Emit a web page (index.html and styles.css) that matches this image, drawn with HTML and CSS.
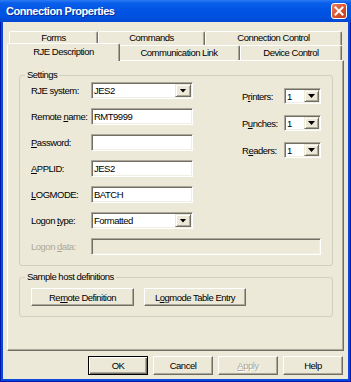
FILE: index.html
```html
<!doctype html>
<html lang="en">
<head>
    <meta charset="UTF-8">
    <title>Connection Properties</title>
    <link rel="stylesheet" href="styles.css">
</head>
<body>
<div class="window">
    <div class="titlebar">
        <span class="title">Connection Properties</span>
        <span class="close" aria-label="Close">
            <svg width="14" height="14" viewBox="0 0 14 14"><path d="M3.5 3.5l7 7M10.5 3.5l-7 7" stroke="#fff" stroke-width="2" stroke-linecap="square"/></svg>
        </span>
    </div>
    <div class="client">
        <div class="tab-row back">
            <div class="tab t-forms">Forms</div>
            <div class="tab t-commands">Commands</div>
            <div class="tab t-control">Connection Control</div>
        </div>
        <div class="tab-row front">
            <div class="tab t-rje selected">RJE Description</div>
            <div class="tab t-link">Communication Link</div>
            <div class="tab t-device">Device Control</div>
        </div>
        <div class="page">
            <fieldset class="group settings">
                <legend>Settings</legend>
                <div class="settings-top">
                    <div class="fields">
                        <label>RJE system:</label>
                        <div class="input combo"><span>JES2</span><i class="drop"></i></div>
                        <label>Remote <u>n</u>ame:</label>
                        <div class="input">RMT9999</div>
                        <label><u>P</u>assword:</label>
                        <div class="input"></div>
                        <label><u>A</u>PPLID:</label>
                        <div class="input">JES2</div>
                        <label><u>L</u>OGMODE:</label>
                        <div class="input">BATCH</div>
                        <label>Logon <u>t</u>ype:</label>
                        <div class="input combo"><span>Formatted</span><i class="drop"></i></div>
                    </div>
                    <div class="devices">
                        <label>P<u>r</u>inters:</label>
                        <div class="input combo small"><span>1</span><i class="drop"></i></div>
                        <label>P<u>u</u>nches:</label>
                        <div class="input combo small"><span>1</span><i class="drop"></i></div>
                        <label>R<u>e</u>aders:</label>
                        <div class="input combo small"><span>1</span><i class="drop"></i></div>
                    </div>
                </div>
                <div class="logon-data">
                    <label class="disabled">Logon <u>d</u>ata:</label>
                    <div class="input off"></div>
                </div>
            </fieldset>
            <fieldset class="group samples">
                <legend>Sample host definitions</legend>
                <div class="sample-buttons">
                    <button class="btn remote">Re<u>m</u>ote Definition</button>
                    <button class="btn logmode">L<u>o</u>gmode Table Entry</button>
                </div>
            </fieldset>
        </div>
        <div class="actions">
            <button class="btn default">OK</button>
            <button class="btn">Cancel</button>
            <button class="btn disabled"><u>A</u>pply</button>
            <button class="btn">Help</button>
        </div>
    </div>
</div>
</body>
</html>
```

FILE: styles.css
```css
body {
    margin: 0;
    font-family: "Liberation Sans", Arial, sans-serif;
    font-size: 9.5px;
    letter-spacing: -0.5px;
    color: #000;
}
.window {
    width: 351px;
    height: 382px;
    display: flex;
    flex-direction: column;
    background: #0A48DA;
    box-shadow: inset 1px 0 #0019A8, inset -1px 0 #0019A8, inset 0 -1px #0019A8;
}
.titlebar {
    height: 22px;
    flex: none;
    display: flex;
    align-items: center;
    justify-content: space-between;
    padding: 0 4px 0 6px;
    background: linear-gradient(#2C7BF6, #0A5FEA 3px, #0055E5 9px, #0052E0 16px, #0047D2);
}
.title {
    color: #fff;
    font-weight: bold;
    font-size: 11px;
    letter-spacing: -0.45px;
    text-shadow: 1px 1px #0A2A9A;
}
.close {
    box-sizing: border-box;
    width: 16px;
    height: 16px;
    display: flex;
    align-items: center;
    justify-content: center;
    border: 1px solid #fff;
    border-radius: 3px;
    background-color: #D9532F;
    background-image: linear-gradient(135deg, #EC8568, #DD5633 45%, #C23D1C);
}
.client {
    flex: 1;
    margin: 0 3px 3px;
    background: #ECE9D8;
    padding: 9px 4px 4px;
    display: flex;
    flex-direction: column;
}
.tab-row {
    display: flex;
    padding-left: 2px;
}
.tab {
    box-sizing: border-box;
    height: 14px;
    border: 1px solid #fff;
    border-bottom: 0;
    border-right-color: #716F64;
    border-radius: 2px 2px 0 0;
    box-shadow: inset -1px 0 #ACA899;
    text-align: center;
    line-height: 12px;
    white-space: nowrap;
}
.front .tab {
    height: 15px;
    line-height: 13px;
}
.t-forms { width: 89px; }
.t-commands { width: 107px; }
.t-control { width: 137px; }
.t-rje { width: 109px; }
.t-link { width: 122px; }
.t-device { width: 102px; }
.front .tab.selected {
    width: 113px;
    height: 18px;
    margin: -2px -2px -1px;
    line-height: 15px;
    position: relative;
    z-index: 1;
    background: #ECE9D8;
}
.page {
    position: relative;
    box-sizing: border-box;
    height: 291px;
    border: 1px solid #fff;
    border-right-color: #716F64;
    border-bottom-color: #716F64;
    box-shadow: inset -1px -1px #ACA899;
    padding: 8px 0 0 11px;
}
.group {
    box-sizing: border-box;
    width: 314px;
    margin: 0;
    border: 1px solid #D0D0BF;
    border-radius: 3px;
    padding: 1px 11px 10px;
}
.group legend {
    margin-left: -6px;
    padding: 0 2px;
    line-height: 12px;
}
.settings-top {
    display: flex;
    align-items: flex-start;
}
.fields {
    display: grid;
    grid-template-columns: 60px 102px;
    grid-auto-rows: 17px;
    row-gap: 9px;
    align-items: center;
}
.devices {
    margin-left: auto;
    margin-top: 6px;
    display: grid;
    grid-template-columns: 42px 37px;
    grid-auto-rows: 16px;
    row-gap: 11px;
    align-items: center;
}
.logon-data {
    display: grid;
    grid-template-columns: 60px 230px;
    height: 17px;
    margin-top: 9px;
    align-items: center;
}
label {
    white-space: nowrap;
}
label.disabled {
    color: #ACA899;
}
.input {
    box-sizing: border-box;
    height: 100%;
    background: #fff;
    border: 1px solid;
    border-color: #ACA899 #fff #fff #ACA899;
    box-shadow: inset 1px 1px #716F64, inset -1px -1px #F1EFE2;
    padding: 0 2px 0 2px;
    line-height: 15px;
    white-space: nowrap;
}
.input.off {
    background: #ECE9D8;
}
.combo {
    display: flex;
    align-items: center;
    padding-right: 1px;
}
.combo span {
    flex: 1;
}
.drop {
    box-sizing: border-box;
    width: 16px;
    height: 13px;
    display: flex;
    align-items: center;
    justify-content: center;
    background: #ECE9D8;
    border: 1px solid;
    border-color: #ECE9D8 #716F64 #716F64 #ECE9D8;
    box-shadow: inset 1px 1px #fff, inset -1px -1px #ACA899;
}
.drop::after {
    content: "";
    width: 7px;
    height: 4px;
    background: #000;
    clip-path: polygon(0 0, 100% 0, 50% 100%);
}
.combo.small .drop {
    width: 15px;
    height: 12px;
}
.samples {
    margin-top: 5px;
    padding-top: 5px;
}
.sample-buttons {
    display: flex;
    gap: 10px;
}
.btn {
    box-sizing: border-box;
    height: 18px;
    padding: 0;
    font: inherit;
    letter-spacing: inherit;
    color: #000;
    background: #ECE9D8;
    border: 1px solid;
    border-color: #fff #716F64 #716F64 #fff;
    box-shadow: inset -1px -1px #ACA899;
}
.btn.remote { width: 103px; }
.btn.logmode { width: 102px; }
.actions {
    margin-top: 5px;
    padding-right: 1px;
    display: flex;
    justify-content: flex-end;
    gap: 5px;
}
.actions .btn {
    width: 60px;
    height: 19px;
}
.btn.default {
    border-color: #000;
    box-shadow: inset 1px 1px #fff, inset -1px -1px #716F64, inset -2px -2px #ACA899;
}
.btn.disabled {
    color: #ACA899;
    text-shadow: 1px 1px #fff;
}
```
